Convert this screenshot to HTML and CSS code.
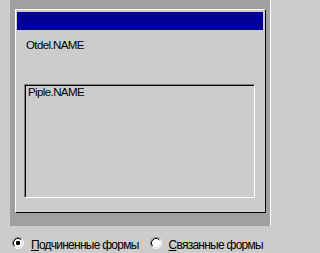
FILE: index.html
```html
<!DOCTYPE html>
<html>
<head>
<meta charset="utf-8">
<link rel="stylesheet" href="styles.css">
</head>
<body>
<div class="panel">
  <div class="frame">
    <div class="titlebar"></div>
    <div class="label">Otdel.NAME</div>
    <div class="sunken">
      <div class="field">Piple.NAME</div>
    </div>
  </div>
</div>
<div class="options">
  <label class="opt">
    <svg class="radio" width="12" height="12" viewBox="0 0 12 12">
      <circle cx="6" cy="6" r="5" fill="#fff"/>
      <path d="M2.11 9.89 A5.5 5.5 0 0 1 9.89 2.11" fill="none" stroke="#808080" stroke-width="1"/>
      <path d="M9.89 2.11 A5.5 5.5 0 0 1 2.11 9.89" fill="none" stroke="#fff" stroke-width="1"/>
      <path d="M2.82 9.18 A4.5 4.5 0 0 1 9.18 2.82" fill="none" stroke="#000" stroke-width="1"/>
      <path d="M9.18 2.82 A4.5 4.5 0 0 1 2.82 9.18" fill="none" stroke="#dfdfdf" stroke-width="1"/>
      <rect x="4" y="4" width="4" height="4" rx="1.2" fill="#000"/>
    </svg>
    <span class="opt-text"><u>П</u>одчиненные формы</span>
  </label>
  <label class="opt">
    <svg class="radio" width="12" height="12" viewBox="0 0 12 12">
      <circle cx="6" cy="6" r="5" fill="#fff"/>
      <path d="M2.11 9.89 A5.5 5.5 0 0 1 9.89 2.11" fill="none" stroke="#808080" stroke-width="1"/>
      <path d="M9.89 2.11 A5.5 5.5 0 0 1 2.11 9.89" fill="none" stroke="#fff" stroke-width="1"/>
      <path d="M2.82 9.18 A4.5 4.5 0 0 1 9.18 2.82" fill="none" stroke="#000" stroke-width="1"/>
      <path d="M9.18 2.82 A4.5 4.5 0 0 1 2.82 9.18" fill="none" stroke="#dfdfdf" stroke-width="1"/>
    </svg>
    <span class="opt-text"><u>С</u>вязанные формы</span>
  </label>
</div>
</body>
</html>
```
FILE: styles.css
```css
html, body {
  margin: 0;
  padding: 0;
  background: #cccccc;
  font-family: "Liberation Sans", Arial, sans-serif;
  color: #000;
  overflow: hidden;
}

.panel {
  margin-left: 10px;
  width: 251px;
  height: 217px;
  padding: 9px 4px 0 5px;
  background: #a0a0a0;
  border-right: 1px solid #ffffff;
}

.frame {
  width: 251px;
  height: 204px;
  box-sizing: border-box;
  background: #cccccc;
  border-top: 1px solid #ffffff;
  border-left: 1px solid #ffffff;
  border-right: 1px solid #000000;
  border-bottom: 1px solid #000000;
  display: flex;
  flex-direction: column;
}

.titlebar {
  height: 18px;
  margin: 2px 2px 0 1px;
  background: #000099;
}

.label {
  margin: 9px 0 0 10px;
  font-size: 11.5px;
  line-height: 13px;
  letter-spacing: -0.6px;
}

.sunken {
  margin: 32px 0 0 8px;
  width: 231px;
  height: 114px;
  box-sizing: border-box;
  border-top: 1px solid #808080;
  border-left: 1px solid #808080;
  border-right: 1px solid #ffffff;
  border-bottom: 1px solid #ffffff;
  box-shadow: inset 1px 1px 0 #000000, inset -1px -1px 0 #cccccc;
  padding: 2px 0 0 3px;
}

.field {
  font-size: 11.5px;
  line-height: 11px;
  letter-spacing: -0.6px;
}

.options {
  display: flex;
  padding: 11px 0 0 12px;
  white-space: nowrap;
}

.opt {
  display: flex;
  align-items: flex-start;
}

.opt + .opt {
  margin-left: 11px;
}

.radio {
  display: block;
  flex: none;
}

.opt-text {
  margin-left: 7px;
  margin-top: 2px;
  font-size: 12px;
  line-height: 12px;
  letter-spacing: -0.75px;
}

.opt-text u {
  text-decoration-thickness: 1px;
  text-underline-offset: 1px;
}
```
